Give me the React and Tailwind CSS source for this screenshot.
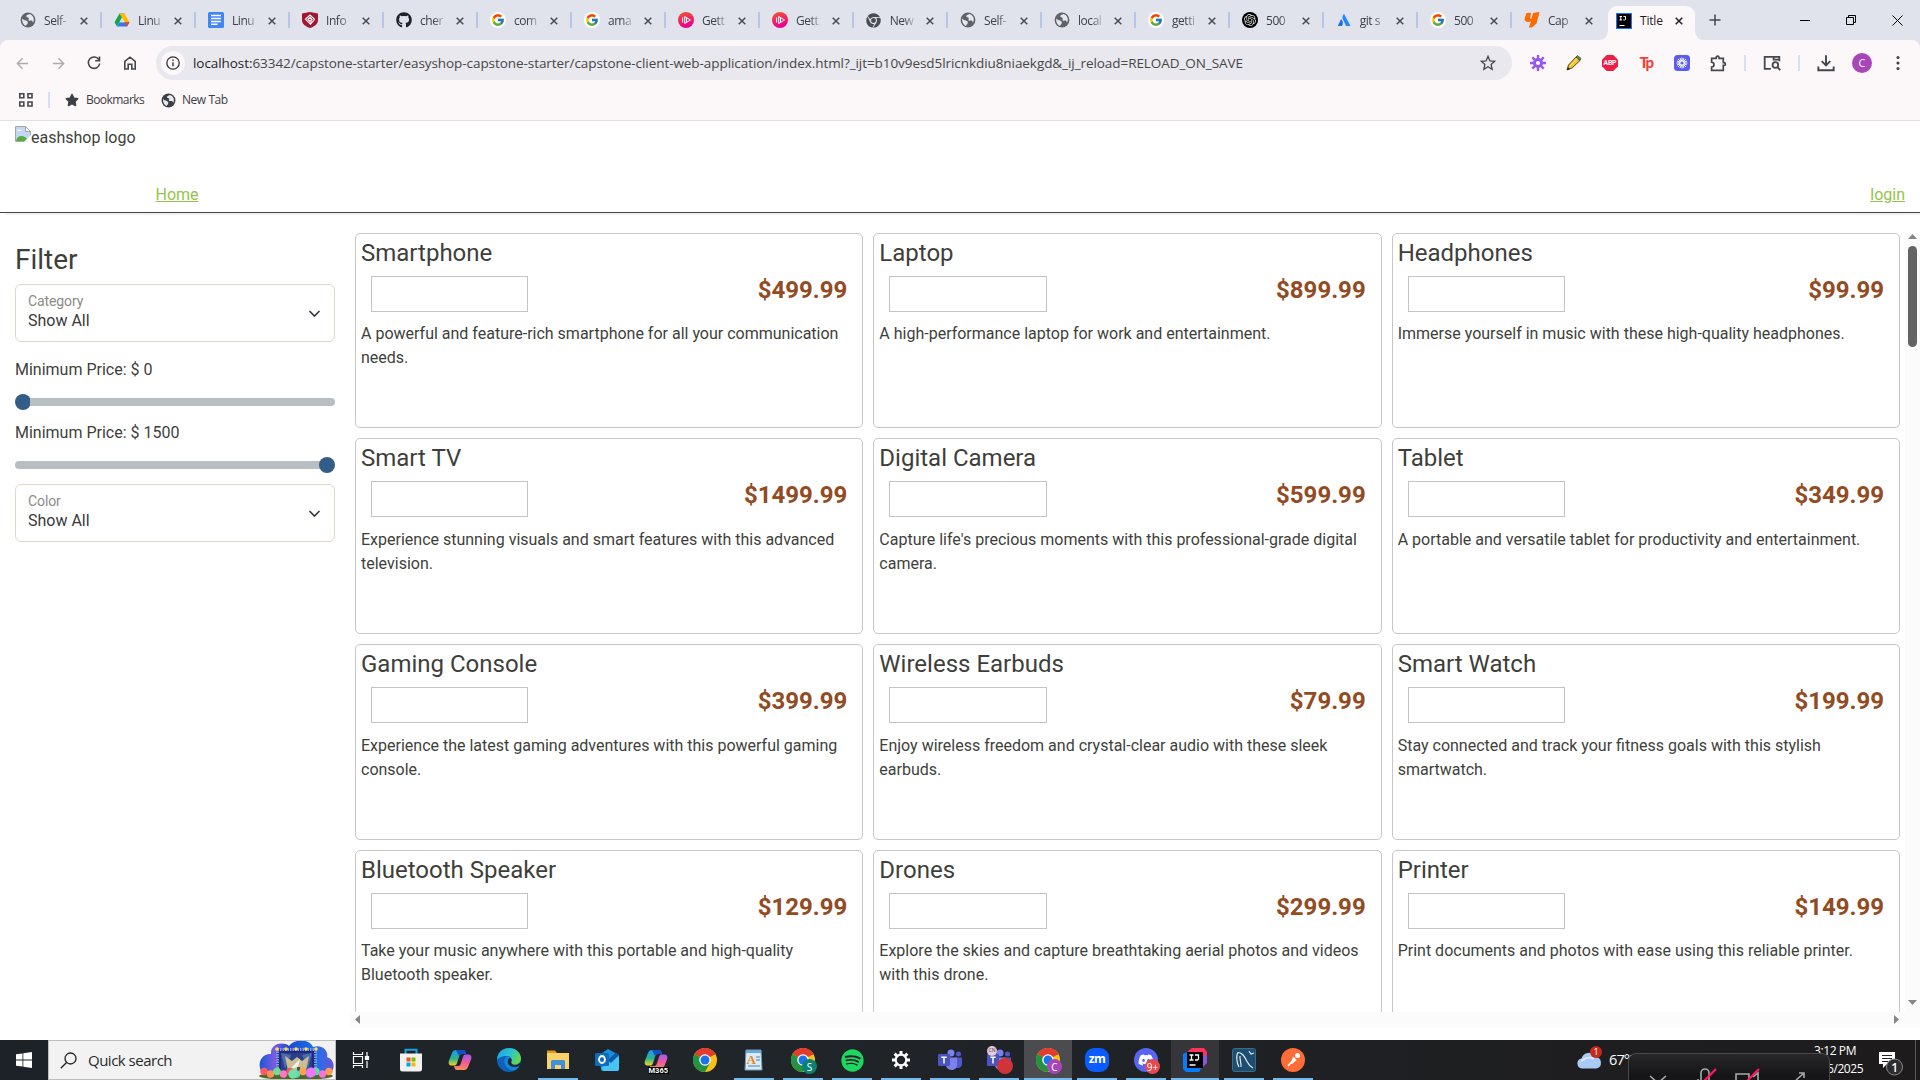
import React from "react";
import { FcGoogle } from "react-icons/fc";
import { FaGithub, FaSpotify, FaStar, FaDiscord, FaChrome } from "react-icons/fa";
import { SiOpenai } from "react-icons/si";

const ui = "font-['Open_Sans','Noto_Sans',sans-serif]";

const Globe = ({ size = 16, color = "#5f6368" }) => (
  <svg width={size} height={size} viewBox="0 0 16 16">
    <circle cx="8" cy="8" r="7.4" fill={color} />
    <path d="M2.200 6.500C3.500 8.500 6 8 7.300 9.200c1 1 .2 2 .2 2.600 0 1-1.500.5-1.300 2.200C3.500 13 1.800 10 2.200 6.500zM9.500 2.100C8 3 6 3 6.300 4.500c.3 1.200 1.900.5 2.400 1.700.4 1.100-.8 1.400 0 2.200.9.700 2.500-.4 3.600.5.600.5.200 1.700.8 1.500C15 7 13 3 9.500 2.100z" fill="#e6e8ee" />
  </svg>
);

const Drive = () => (
  <svg width="16" height="16" viewBox="0 0 16 16">
    <path d="M5.500 1.500h5L8 5.800 3 14.400.5 10.200z" fill="#0fa658" />
    <path d="M5.500 1.500h5l5 8.700h-5z" fill="#ffba00" />
    <path d="M.5 10.200 3 14.400h10l2.500-4.200H5.600L3 14.400z" fill="#3777e3" />
    <path d="M10.500 10.200h5L13 14.400z" fill="#ea4335" />
    <path d="M8 5.800 5.500 10.200h5z" fill="#e0e3ec" />
  </svg>
);
const Docs = () => (
  <svg width="16" height="16" viewBox="0 0 16 16">
    <rect width="16" height="16" rx="1.500" fill="#4285f4" />
    <path d="M3 3.500h10M3 6.500h10M3 9.500h10M3 12.300h6.500" stroke="#fff" strokeWidth="1.400" />
  </svg>
);
const Shield = () => (
  <svg width="16" height="16" viewBox="0 0 16 16">
    <path d="M0 1.500 8 0l8 1.500V8c0 4-3.500 6.500-8 8-4.500-1.500-8-4-8-8z" fill="#a3162f" />
    <path d="M8 3 3.500 7.300 8 11.700l2-2M8 3l4.500 4.300L8 12.800M8 5.400 6 7.400l2 2 2-2z" fill="none" stroke="#fff" strokeWidth="1.100" />
  </svg>
);
const GoogleIcon = () => (
  <span className="flex size-4 items-center justify-center rounded-full bg-white"><FcGoogle size={14} /></span>
);
const Plural = () => (
  <svg width="16" height="16" viewBox="0 0 16 16">
    <defs><linearGradient id="pl" x1="0" y1="0" x2=".3" y2="1"><stop offset="0" stopColor="#f05a28" /><stop offset="1" stopColor="#ec008c" /></linearGradient></defs>
    <circle cx="8" cy="8" r="8" fill="url(#pl)" />
    <path d="M6.700 4.500v7L12.500 8zM4.600 5.500v5M8.500 6v4" fill="none" stroke="#fff" strokeWidth="1" />
  </svg>
);
const Atlas = () => (
  <svg width="14" height="14" viewBox="0 0 14 14">
    <path d="M4 6c2 2 2.500 4.500 1 7H.8z" fill="#1e6fe0" /><path d="M7 .8C4.500 4 5.500 6 7.500 9.500L9 13h4.500z" fill="#2684ff" />
  </svg>
);
const Orange = () => (
  <svg width="16" height="16" viewBox="0 0 16 16">
    <path d="M2.500 1 7 .7 6 6.500l1.500.2L9 1l6.500-1-3 11.500L8 15.500H4.800L7 9.500C3 10.500 0 9.500.6 6.500z" fill="#ff6a00" />
  </svg>
);
const IJ = () => (
  <svg width="16" height="16" viewBox="0 0 16 16">
    <rect x=".5" y=".5" width="15" height="15" fill="#000" stroke="#087cfa" />
    <path d="M3.500 3.500h2.500M4.800 3.500V7M3.500 7h2.500M7.500 3.500h2V6.500L8.800 7h-1.500M3.500 12.500h5" stroke="#fff" fill="none" strokeWidth="1" />
  </svg>
);
const Gpt = () => (
  <span className="flex size-4 items-center justify-center rounded-full bg-black text-[#d8d8d8]"><SiOpenai size={12} /></span>
);

const tabs = [
  ["Self-", <Globe />], ["Linu", <Drive />], ["Linu", <Docs />], ["Info", <Shield />],
  ["cher", <FaGithub size={16} color="#1f2328" />], ["com", <GoogleIcon />], ["ama", <GoogleIcon />],
  ["Gett", <Plural />], ["Gett", <Plural />], ["New", <FaChrome size={15} color="#4a4d51" />],
  ["Self-", <Globe />], ["local", <Globe />], ["getti", <GoogleIcon />], ["500", <Gpt />],
  ["git s", <Atlas />], ["500", <GoogleIcon />], ["Cap", <Orange />],
];

const Cross = ({ c = "#474a50" }) => (
  <svg width="8" height="8" viewBox="0 0 8 8"><path d="M.7.7l6.600 6.600M7.300.7.7 7.300" stroke={c} strokeWidth="1.500" /></svg>
);

function TabStrip() {
  return (
    <div className="flex h-10 bg-[#e0e3ec] pl-2">
      {tabs.map(([t, icon], i) => (
        <div key={i} className="flex h-10 w-[94px] shrink-0 items-center pl-3">
          <span className="flex size-4 items-center justify-center">{icon}</span>
          <span className="ml-2 mt-px w-[28px] whitespace-nowrap text-[12px] tracking-[-0.45px] text-[#3c4048] [mask-image:linear-gradient(to_right,black_50%,transparent)]">{t}</span>
          <span className="ml-[9px] mt-px w-2"><Cross /></span>
          <span className={i < 16 ? "ml-[12px] h-4 w-[2px] shrink-0 bg-[#b6c6e4]" : "hidden"} />
        </div>
      ))}
      <svg width="10" height="40" viewBox="0 0 10 40" className="-ml-2 shrink-0"><path d="M0 40Q10 40 10 30V40z" fill="#fcf7f9" /></svg>
      <div className="mt-[6px] flex h-[34px] w-[87px] shrink-0 items-center rounded-t-[9px] bg-[#fcf7f9] pb-[5px] pl-2">
        <IJ />
        <span className="ml-2 mt-px w-[27px] text-[12px] tracking-[-0.2px] text-[#1f1f1f]">Title</span>
        <span className="ml-2"><Cross c="#222" /></span>
      </div>
      <svg width="10" height="40" viewBox="0 0 10 40" className="shrink-0"><path d="M10 40Q0 40 0 30V40z" fill="#fcf7f9" /></svg>
      <svg width="12" height="12" viewBox="0 0 12 12" className="ml-[4px] mt-[14px] shrink-0"><path d="M6 .5v11M.5 6h11" stroke="#44474c" strokeWidth="1.500" /></svg>
      <div className="ml-auto flex items-center pr-[17px] text-black">
        <svg width="10" height="10" viewBox="0 0 10 10"><path d="M0 5.500h10" stroke="#000" /></svg>
        <svg width="10" height="10" viewBox="0 0 10 10" className="ml-9"><path d="M.5 2.500h7v7h-7zM2.500 2.500v-2h7v7h-2" fill="none" stroke="#000" /></svg>
        <svg width="11" height="11" viewBox="0 0 11 11" className="ml-[36px]"><path d="M.5.5l10 10M10.500.5l-10 10" stroke="#000" /></svg>
      </div>
    </div>
  );
}

const Slot = ({ children, w = "w-9" }) => <span className={"flex h-full shrink-0 items-center justify-center " + w}>{children}</span>;
const Stroke = ({ d, c = "#44474c", s = 16, w = 1.6, children }) => (
  <svg width={s} height={s} viewBox="0 0 16 16" fill="none" stroke={c} strokeWidth={w}><path d={d} />{children}</svg>
);

function Toolbar() {
  return (
    <div className="bg-[#e0e3ec]">
    <div className="flex h-[46px] items-center rounded-t-lg bg-[#fcf7f9] pl-1">
      <Slot><Stroke c="#acabae" w={1.5} d="M14 8H2.500M8 2.500 2.500 8 8 13.500" s={15} /></Slot>
      <Slot><Stroke c="#acabae" w={1.5} d="M2 8h11.500M8 2.500 13.500 8 8 13.500" s={15} /></Slot>
      <Slot><Stroke d="M13 4.800A5.700 5.700 0 1 0 13.700 8.500M13.500 1.500v4.300H9.200" /></Slot>
      <Slot><Stroke d="M2.800 14V6.300L8 2.200l5.200 4.100V14H9.800V9.300H6.200V14z" /></Slot>
      <div className="ml-2 flex h-[34px] w-[1356px] shrink-0 items-center rounded-full bg-[#e9e8ee] pl-[5px]">
        <span className="flex size-6 items-center justify-center rounded-full bg-[#fcf7f9]">
          <svg width="14" height="14" viewBox="0 0 14 14"><circle cx="7" cy="7" r="6.200" fill="none" stroke="#333" strokeWidth="1.300" /><path d="M7 6.200v4M7 3.500v1.400" stroke="#333" strokeWidth="1.400" /></svg>
        </span>
        <span className="ml-2 whitespace-nowrap text-[13.5px] tracking-[-0.065px] text-[#474747]"><span className="text-[#1f1f1f]">localhost:</span>63342/capstone-starter/easyshop-capstone-starter/capstone-client-web-application/index.html?_ijt=b10v9esd5lricnkdiu8niaekgd&amp;_ij_reload=RELOAD_ON_SAVE</span>
        <span className="ml-auto mr-4"><Stroke w={1.3} d="M8 1.300 9.900 5.900l4.900.4-3.700 3.200 1.100 4.900L8 11.800l-4.200 2.600 1.100-4.900L1.200 6.300l4.900-.4z" /></span>
      </div>
      <div className="ml-2 flex h-full items-center">
        <Slot>
          <svg width="16" height="16" viewBox="0 0 16 16"><g stroke="#9458ee" strokeWidth="2.400"><path d="M8 0v16M0 8h16M2.300 2.300l11.400 11.400M13.700 2.300 2.300 13.700" /></g><circle cx="8" cy="8" r="5" fill="#9458ee" /><circle cx="8" cy="8" r="2" fill="#fff" /></svg>
        </Slot>
        <Slot>
          <svg width="16" height="16" viewBox="0 0 16 16"><path d="M1 15 2.500 10 10 2l4 3.500L6 13z" fill="#f5c431" stroke="#5d4514" /><path d="m10 2 1.500-1.500L15 3.500 14 5.500z" fill="#53a348" stroke="#333" strokeWidth=".7" /><path d="m1 15 1-3 2 2z" fill="#222" /><path d="m4 11 7-7.500" stroke="#fbe58b" /></svg>
        </Slot>
        <Slot>
          <svg width="16" height="16" viewBox="0 0 16 16"><path d="M4.700 0h6.600L16 4.700v6.600L11.300 16H4.700L0 11.300V4.700z" fill="#ed1e45" /><text x="8" y="10.400" fontSize="6.800" fontWeight="700" textAnchor="middle" fill="#fff" fontFamily="Roboto" textLength="13">ABP</text></svg>
        </Slot>
        <Slot><span className="mb-px font-['Lato',sans-serif] text-[15px] font-black leading-none tracking-[-1.5px] text-[#f43f3a]">Tp</span></Slot>
        <Slot>
          <svg width="16" height="16" viewBox="0 0 16 16"><rect width="16" height="16" rx="3.500" fill="#5b5cf0" /><g stroke="#fff" strokeWidth="1"><path d="M8 2.500v11M2.500 8h11M4 4l8 8M12 4l-8 8M6 3l4 10M10 3 6 13M3 6l10 4M13 6 3 10" /></g><circle cx="8" cy="8" r="2.700" fill="#fff" /><circle cx="8" cy="8" r="1.600" fill="#5b5cf0" /></svg>
        </Slot>
        <Slot><Stroke s={17} w={1.6} d="M1.500 3.200h4.300V2.400a1.300 1.300 0 0 1 2.700 0v.8H12.500v4h.7a1.300 1.300 0 0 1 0 2.600h-.7v4.700H1.500v-3.200a2 2 0 0 0 0-4.500z" /></Slot>
        <span className="ml-[8px] h-4 w-[2px] bg-[#d3e0f8]" />
        <Slot w="w-[52px]"><Stroke s={18} d="M7 13.200H1.500V2.500h13v4M9.500 2.500h5v2.500h-5z"><circle cx="11" cy="9.800" r="2.500" /><path d="m12.800 11.600 2.600 2.800" /></Stroke></Slot>
        <span className="h-4 w-[2px] bg-[#d3e0f8]" />
        <Slot w="w-[52px]"><Stroke s={18} w={1.7} d="M8 1v9M4.200 6.300 8 10.200l3.800-3.900M1.200 11v3.500h13.600V11" /></Slot>
        <span className="flex size-5 items-center justify-center rounded-full bg-[#a846b9] text-[11px] text-white">C</span>
        <Slot w="w-[52px]"><svg width="4" height="16" viewBox="0 0 4 16" fill="#44474c"><circle cx="2" cy="2.500" r="1.600" /><circle cx="2" cy="8" r="1.600" /><circle cx="2" cy="13.500" r="1.600" /></svg></Slot>
      </div>
    </div>
    </div>
  );
}

function Bookmarks() {
  return (
    <div className="flex h-[35px] items-center border-b border-[#e2dfe2] bg-[#fcf7f9] pb-[6px] pl-[19px] text-[12px] text-[#3c4043]">
      <svg width="14" height="14" viewBox="0 0 14 14" fill="none" stroke="#44474c" strokeWidth="1.600"><path d="M.8.8h4v4h-4zM9 .8h4v4H9zM.8 9h4v4h-4zM9 9h4v4H9z" /></svg>
      <span className="ml-[15px] h-4 w-[2px] bg-[#d3e0f8]" />
      <span className="ml-[15px]"><FaStar size={14} color="#3c4043" /></span>
      <span className="ml-[7px] w-[75px] tracking-[-0.55px]">Bookmarks</span>
      <Globe size={15} color="#3c4043" />
      <span className="ml-[6px] tracking-[-0.45px]">New Tab</span>
    </div>
  );
}

const products = [
  ["Smartphone", "499.99", "A powerful and feature-rich smartphone for all your communication needs."],
  ["Laptop", "899.99", "A high-performance laptop for work and entertainment."],
  ["Headphones", "99.99", "Immerse yourself in music with these high-quality headphones."],
  ["Smart TV", "1499.99", "Experience stunning visuals and smart features with this advanced television."],
  ["Digital Camera", "599.99", "Capture life's precious moments with this professional-grade digital camera."],
  ["Tablet", "349.99", "A portable and versatile tablet for productivity and entertainment."],
  ["Gaming Console", "399.99", "Experience the latest gaming adventures with this powerful gaming console."],
  ["Wireless Earbuds", "79.99", "Enjoy wireless freedom and crystal-clear audio with these sleek earbuds."],
  ["Smart Watch", "199.99", "Stay connected and track your fitness goals with this stylish smartwatch."],
  ["Bluetooth Speaker", "129.99", "Take your music anywhere with this portable and high-quality Bluetooth speaker."],
  ["Drones", "299.99", "Explore the skies and capture breathtaking aerial photos and videos with this drone."],
  ["Printer", "149.99", "Print documents and photos with ease using this reliable printer."],
];

function Card({ p }) {
  return (
    <div className="h-[195.67px] rounded-[5px] border border-[#c6c6c6] px-[5px] pt-[5px]">
      <h3 className="text-[24px] leading-[28.8px]">{p[0]}</h3>
      <div className="mt-2 flex h-[36px] items-start justify-between px-[10px]">
        <div className="h-[36px] w-[157.3px] border border-[#c4c4c4]" />
        <span className="text-[24px] font-bold leading-[28px] text-[#924b22]">${p[1]}</span>
      </div>
      <p className="mt-[10.7px] text-[16px] leading-6">{p[2]}</p>
    </div>
  );
}

function SelectBox({ label }) {
  return (
    <div className="flex h-[58px] w-[320px] items-center justify-between rounded-md border border-[#ded8c8] pb-[3px] pl-3 pr-[14.5px]">
      <div>
        <div className="text-[14px] leading-[18px] tracking-[-0.1px] text-[#8d8b86]">{label}</div>
        <div className="mt-px text-[16px] leading-[20px] text-[#3a3a38]">Show All</div>
      </div>
      <svg width="11" height="8" viewBox="0 0 11 8" fill="none" stroke="#343a40" strokeWidth="1.700" strokeLinecap="round" className="mt-[4px]"><path d="m1 1.500 4.500 4.500L10 1.500" /></svg>
    </div>
  );
}

const Range = ({ end }) => (
  <div className="flex h-4 w-[320px] items-center">
    {end ? null : <span className="size-4 shrink-0 rounded-full bg-[#325d88]" />}
    <span className={end ? "h-2 flex-1 rounded-l-full bg-[#b8bfc2]" : "-ml-px h-2 flex-1 rounded-r-full bg-[#b8bfc2]"} />
    {end ? <span className="-ml-px size-4 shrink-0 rounded-full bg-[#325d88]" /> : null}
  </div>
);

function Page() {
  return (
    <div className="flex h-[919px] flex-col bg-white font-['Roboto',sans-serif] text-[#3e3f3a]">
      <header className="flex h-[92px] shrink-0 flex-col border-b border-[#444] px-[15px] shadow-[5px_2px_0_#f0f0f0]">
        <div className="mt-[5px] flex h-6 items-start">
          <svg width="16" height="16" viewBox="0 0 16 16">
            <path d="M.5.500h10l5 5v10H.5z" fill="#c3d6f5" stroke="#a5a5a5" /><path d="M10.500.5v5h5z" fill="#fff" stroke="#a5a5a5" /><path d="M2 5c1-2 4-2 5 0z" fill="#fff" /><path d="M1 15c1-6 8-7 13 0z" fill="#56ad3c" /><path d="M9 15.800 16 9v7z" fill="#fff" />
          </svg>
          <span className="text-[16px] leading-6">eashshop logo</span>
        </div>
        <div className="mt-[33px] flex justify-between pl-[140.5px] text-[16px] leading-6 text-[#93c54b] underline">
          <span>Home</span><span>login</span>
        </div>
      </header>
      <div className="flex h-[814px]">
        <aside className="w-[340px] shrink-0 pl-[15px] pt-[30px]">
          <h2 className="text-[28px] leading-[34px]">Filter</h2>
          <div className="mt-[7px]"><SelectBox label="Category" /></div>
          <div className="mt-[16px] text-[16px] leading-6">Minimum Price: $ 0</div>
          <div className="mt-[12px]"><Range /></div>
          <div className="mt-[11px] text-[16px] leading-6">Minimum Price: $ 1500</div>
          <div className="mt-[12px]"><Range end /></div>
          <div className="mt-[11px]"><SelectBox label="Color" /></div>
        </aside>
        <div className="flex w-[1565px] shrink-0 flex-col">
          <div className="grid h-[799px] grid-cols-3 content-start gap-[10px] overflow-hidden pl-[15px] pr-[5px] pt-[19.8px]">
            {products.map((p) => <Card key={p[0]} p={p} />)}
          </div>
          <div className="ml-[10px] flex h-[15px] items-center justify-between bg-[#fbfbfb] pl-[5px] pr-[6px]">
            <svg width="5" height="9" viewBox="0 0 5 9"><path d="M5 0v9L0 4.500z" fill="#858585" /></svg>
            <svg width="5" height="9" viewBox="0 0 5 9"><path d="M0 0v9l5-4.500z" fill="#858585" /></svg>
          </div>
        </div>
        <div className="mt-5 flex h-[794px] w-[15px] flex-col items-center bg-[#fbfbfb]">
          <svg width="9" height="5" viewBox="0 0 9 5" className="mt-[1px]"><path d="M0 5h9L4.500 0z" fill="#858585" /></svg>
          <span className="mt-[7px] h-[101px] w-[9px] rounded-full bg-[#636363]" />
          <svg width="9" height="5" viewBox="0 0 9 5" className="mb-[22px] mt-auto"><path d="M0 0h9L4.500 5z" fill="#858585" /></svg>
        </div>
      </div>
    </div>
  );
}

const ChromeLogo = () => (
  <svg width="24" height="24" viewBox="0 0 24 24">
    <circle cx="12" cy="12" r="12" fill="#fbc116" />
    <path d="M12 12 1.600 6A12 12 0 0 1 22.400 6z" fill="#e33b2e" />
    <path d="M12 12 1.600 6A12 12 0 0 0 12 24l5-9z" fill="#229342" />
    <path d="M12 6.200h10.500" stroke="#e33b2e" />
    <circle cx="12" cy="12" r="5.800" fill="#fff" /><circle cx="12" cy="12" r="4.500" fill="#1a73e8" />
  </svg>
);
const Badge = ({ bg, children, cls = "size-[15px]" }) => (
  <span className={"absolute -bottom-[2px] -right-[2px] flex items-center justify-center rounded-full text-[10px] leading-none text-white " + cls + " " + bg}>{children}</span>
);
const CopilotLogo = () => (
  <svg width="24" height="24" viewBox="0 0 24 24">
    <defs>
      <linearGradient id="ca" x1="0" y1="0" x2="0" y2="1"><stop offset="0" stopColor="#1b9cf2" /><stop offset=".55" stopColor="#2bb38c" /><stop offset="1" stopColor="#f4d32a" /></linearGradient>
      <linearGradient id="cb" x1="0" y1="0" x2="0" y2="1"><stop offset="0" stopColor="#a259f2" /><stop offset=".5" stopColor="#ee5a9c" /><stop offset="1" stopColor="#fb9151" /></linearGradient>
    </defs>
    <path d="M8 2h7c2 0 2.500 2 3 4h-4c-2 0-2.500 1-3 3l-2 6c-.6 2-1.400 2.500-3 2.500H4c-3 0-4-2-3-5L4 5c.8-2 2-3 4-3z" fill="url(#ca)" />
    <path d="M16 22H9c-2 0-2.500-2-3-4h4c2 0 2.500-1 3-3l2-6c.6-2 1.400-2.500 3-2.500h2c3 0 4 2 3 5L20 19c-.8 2-2 3-4 3z" fill="url(#cb)" />
    <path d="M8 2h7c2 0 2.500 2 3 4h-4c-2 0-2.500.5-3 2z" fill="#164fc4" />
  </svg>
);
const TeamsLogo = () => (
  <svg width="24" height="24" viewBox="0 0 24 24">
    <circle cx="13" cy="5" r="3.500" fill="#7b83eb" /><circle cx="20.500" cy="6" r="2.500" fill="#5059c9" />
    <path d="M17 9.500h7V16c0 3-3 5-6 3.500z" fill="#5059c9" /><path d="M8 9.500h11V17c0 6-9 7-11 1z" fill="#7b83eb" />
    <rect y="6" width="12" height="12" rx="1" fill="#4b53bc" /><path d="M3.300 9.200h5.400M6 9.200v6.300" stroke="#fff" strokeWidth="1.500" />
  </svg>
);

const apps = [
  { icon: <svg width="18" height="16" viewBox="0 0 18 16" fill="none" stroke="#fff" strokeWidth="1.200" className="mr-[3px]"><path d="M1.500 0v2.500h9V0M1.500 4.500h9v7h-9zM1.500 16v-2.500h9V16M15 0v4M15 9v7" /><path d="M13.500 4.500h3v3h-3z" fill="#fff" /></svg> },
  { icon: <svg width="24" height="24" viewBox="0 0 24 24"><path d="M6.500 6V1.800h11V6" fill="none" stroke="#1ba1e2" strokeWidth="2" /><path d="M1 5.500h22V21a2.500 2.500 0 0 1-2.500 2.500h-17A2.500 2.500 0 0 1 1 21z" fill="#f1f1f1" /><path d="M7.500 9.500h4v4h-4z" fill="#f25022" /><path d="M12.500 9.500h4v4h-4z" fill="#7fba00" /><path d="M7.500 14.500h4v4h-4z" fill="#00a4ef" /><path d="M12.500 14.500h4v4h-4z" fill="#ffb900" /></svg> },
  { icon: <CopilotLogo /> },
  { icon: <svg width="24" height="24" viewBox="0 0 24 24"><defs><linearGradient id="ed" x1="0" y1="0" x2="1" y2=".4"><stop offset="0" stopColor="#1f9de6" /><stop offset=".6" stopColor="#2bc3d2" /><stop offset="1" stopColor="#62d84e" /></linearGradient></defs><circle cx="12" cy="12" r="12" fill="#0c62b8" /><path d="M0 12C0 5 5 0 12 0s12 5 12 10.500c0 4-3 6-6.500 6-2.500 0-4-1-3.500-2 1.500-2 1-6.500-4-6.500S1 10 0 12z" fill="url(#ed)" /><path d="M14 14.500c1.500-2 1-6-3-6.500-5 1-6 10 3 14 4 .8 6.500-1 8-3.500-5 2-9-.5-8-4z" fill="#1585d8" /><path d="M24 14c-3 4-9.500 4.500-10-.5 1-1 .5-3-1-3.500-3 1-3 6 .5 8 3 1.700 7 1 9.500-1z" fill="#20262b" /></svg> },
  { icon: <svg width="24" height="24" viewBox="0 0 24 24"><path d="M1 2.500h8l2 2.500H1z" fill="#dd9a14" /><path d="M1 5h22v16H1z" fill="#fbd268" /><path d="M5 21v-7.500A1.500 1.500 0 0 1 6.500 12h11a1.500 1.500 0 0 1 1.500 1.500V21h-4v-4H9v4z" fill="#3f8fdc" /></svg>, run: 1 },
  { icon: <svg width="24" height="24" viewBox="0 0 24 24"><path d="M4 7 13 1l11 6v14a2 2 0 0 1-2 2H8a2 2 0 0 1-2-2z" fill="#1490df" /><path d="m6 20 18-12v13a2 2 0 0 1-2 2H8z" fill="#45c6f5" /><path d="M13 12 21 4.500 24 7 16 15z" fill="#0c59a4" /><rect y="5" width="14" height="13" rx="1.500" fill="#0f6cbd" /><ellipse cx="7" cy="11.500" rx="3" ry="3.500" fill="none" stroke="#fff" strokeWidth="1.800" /></svg> },
  { icon: <span className="relative flex h-6 w-6"><CopilotLogo /><span className="absolute -bottom-[2px] -right-[1px] bg-black px-px font-['Roboto',sans-serif] text-[7.500px] font-bold leading-[7px] text-white">M365</span></span> },
  { icon: <ChromeLogo /> },
  { icon: <svg width="20" height="24" viewBox="0 0 20 24"><path d="M2 2h15l1 20H1z" fill="#dceaf4" stroke="#6d9cc0" /><path d="M2 2h15v3H2z" fill="#6aa9d6" /><text x="2.500" y="16" fontSize="13" fontWeight="700" fontFamily="Liberation Serif" fill="#e98326">A</text><path d="M12 9h4M12 12h4M4 18h12" stroke="#4384b9" /></svg>, run: 1 },
  { icon: <span className="relative"><ChromeLogo /><Badge bg="bg-[#0b8073]">S</Badge></span>, run: 1 },
  { icon: <FaSpotify size={23} color="#1ed760" />, run: 1 },
  { icon: <svg width="20" height="20" viewBox="0 0 20 20" fill="none" stroke="#fff"><circle cx="10" cy="10" r="5.300" strokeWidth="2.200" /><path d="M10 1v3.500M10 15.500V19M1 10h3.500M15.500 10H19M3.600 3.600 6 6M14 14l2.400 2.400M16.400 3.600 14 6M6 14l-2.400 2.400" strokeWidth="3" /></svg>, run: 1 },
  { icon: <TeamsLogo />, run: 1 },
  { icon: <span className="relative"><TeamsLogo /><span className="absolute left-0 top-[-2px] flex size-[10px] items-center justify-center rounded-full bg-[#e4ccd8] text-[5px] text-[#603050]">CN</span><Badge bg="bg-[#d13438]" cls="size-4" /></span>, run: 1 },
  { icon: <span className="relative"><ChromeLogo /><Badge bg="bg-[#a846b9]">C</Badge></span>, run: 2, hl: "bg-[#4b4c4f]" },
  { icon: <span className="flex size-6 items-center justify-center rounded-[9px] bg-[#0b5cff] pb-[2px] text-[12px] font-bold tracking-[-0.5px] text-white">zm</span>, run: 1 },
  { icon: <span className="relative flex size-6 items-center justify-center rounded-full bg-[#5865f2]"><FaDiscord size={16} color="#fff" /><Badge bg="bg-[#e5484d]">9+</Badge></span>, run: 1 },
  { icon: <svg width="24" height="24" viewBox="0 0 24 24"><path d="M0 6 6 3v18H0z" fill="#087cfa" /><path d="M0 15h12l6 6-2 3H3l-3-3z" fill="#087cfa" /><path d="M5 3 9 0h12l3 4v8l-6 8z" fill="#fe315d" /><path d="M20 8l4-1v8l-6 6z" fill="#8a55d8" /><path d="M4 4h16v16H4z" fill="#000" /><path d="M6.500 7h4M8.500 7v5M6.500 12h4M12 7h3.500v4l-1 1H12M6.500 17h6" stroke="#fff" strokeWidth="1.300" fill="none" /></svg>, run: 2, hl: "bg-[#36363a]" },
  { icon: <svg width="24" height="24" viewBox="0 0 24 24"><rect x=".5" y=".5" width="23" height="23" rx="2" fill="#1d4e70" stroke="#386b8c" /><path d="M7 19C4.500 15 4 7 6 4.500c5 0 7 5 9 9 1.500 3 3 5 6 6.500M8 8c-.5 4 1.500 7 1 11M17 3l2 3 3-1" stroke="#dfe9f0" strokeWidth="1.200" fill="none" /></svg>, run: 1 },
  { icon: <svg width="24" height="24" viewBox="0 0 24 24"><circle cx="12" cy="12" r="12" fill="#ff6c37" /><path d="m7 18 7-8M12.500 10l2 2-4 3.500z" stroke="#fff" strokeWidth="1.600" fill="#fff" /><circle cx="16.500" cy="7.500" r="2.500" fill="#fff" /></svg>, run: 1 },
];

const balloons = ["#ff5a5f", "#ff8f5a", "#6fe08a", "#ff77c8", "#f45b5b", "#53d8c9", "#ffa24a", "#b35cff", "#57e39b", "#ff6fe0", "#ff9a55"];

const Festival = () => (
  <svg width="75" height="38" viewBox="0 0 75 38" className="shrink-0">
    <defs>
      <linearGradient id="tree" x1="0" y1="0" x2="1" y2="0"><stop offset="0" stopColor="#1b57d8" /><stop offset=".2" stopColor="#7a5be0" /><stop offset=".4" stopColor="#1c49cf" /><stop offset=".75" stopColor="#1673ee" /><stop offset="1" stopColor="#6a55d6" /></linearGradient>
    </defs>
    <ellipse cx="37" cy="35" rx="37" ry="4" fill="#4c6b2a" />
    <path d="M2 30C-2 22 3 12 12 13 11 3 24 0 30 5 36-3 51-2 54 6c9-3 16 4 14 10 8 3 8 11 4 16z" fill="url(#tree)" />
    <path d="M18.500 8.500h38V31h-38z" fill="#1b2c80" stroke="#8e9be0" strokeWidth="3" strokeDasharray="1.500 1" />
    <path d="M22 12h31v18H22z" fill="#2b3f86" />
    <path d="m22 12 10 2-6 14zM53 12l-10 2 6 14z" fill="#4d6cb0" />
    <path d="M26 15l7 5 5-4 5 4 7-5-3 15H29z" fill="#cbbf91" />
    <path d="m31 28 10-10-2 8z" fill="#f1f1f1" /><path d="M38 30v-4h3v4z" fill="#315e4c" />
    <g fill="#ffe15a">{[18, 27, 37, 47, 57].map((x) => <circle key={x} cx={x} cy="8" r="1.800" />)}</g>
    {balloons.map((c, i) => <circle key={i} cx={5 + i * 6.5} cy={i % 2 ? 33 : 30.5} r="3.700" fill={c} />)}
    <circle cx="34" cy="33" r="4.700" fill="#6fe0a8" /><circle cx="52" cy="31.500" r="5" fill="#ee77ff" />
  </svg>
);

function Taskbar() {
  return (
    <div className={"flex h-10 overflow-hidden bg-linear-to-r from-[#1c2227] via-[#20252a] via-40% to-[#1d1b1c] " + ui}>
      <div className="flex w-12 shrink-0 items-center justify-center">
        <svg width="16" height="16" viewBox="0 0 16 16" fill="#fff"><path d="M0 2.300 6.500 1.400v6.200H0zM7.300 1.300 16 0v7.600H7.300zM0 8.400h6.500v6.200L0 13.700zM7.300 8.400H16V16l-8.700-1.300z" /></svg>
      </div>
      <div className="flex w-[288px] shrink-0 items-center border border-[#bdbdbd] bg-[#f2f2f2] pl-[11px]">
        <svg width="17" height="17" viewBox="0 0 17 17" fill="none" stroke="#222" strokeWidth="1.300"><circle cx="10.500" cy="6.500" r="5.500" /><path d="M6.500 10.500.8 16.300" /></svg>
        <span className="ml-[11px] w-[171px] text-[15px] tracking-[-0.5px] text-[#2b2b2b]">Quick search</span>
        <Festival />
      </div>
      <div className="ml-[2px] flex gap-px">
        {apps.map((a, i) => (
          <div key={i} className={"flex w-12 flex-col items-center " + (a.hl || "")}>
            <div className="flex h-[38px] items-center pt-[2px]">{a.icon}</div>
            {a.run ? <span className={a.run === 2 ? "h-[2px] w-12 bg-[#76b9ed]" : "h-[2px] w-10 bg-[#76b9ed]"} /> : null}
          </div>
        ))}
      </div>
      <div className="ml-auto flex w-[343px] items-center text-white">
        <span className="relative">
          <svg width="25" height="18" viewBox="0 0 25 18"><path d="M5 17.500a5 5 0 0 1-.5-9.900A7.500 7.500 0 0 1 18.500 6a5.800 5.800 0 0 1 .7 11.500z" fill="#a9c9f7" /><path d="M4 10c3-1 6-6 13-2" stroke="#dbe9fd" strokeWidth="2" fill="none" /></svg>
          <span className="absolute -right-0 -top-[5px] flex size-3 items-center justify-center rounded-full bg-[#c42b1c] text-[9px]">1</span>
        </span>
        <span className="ml-[7px] text-[14.5px] tracking-[-0.9px]">67°F</span>
        <div className="relative ml-auto w-[101px] text-[12px] tracking-[-0.4px]">
          <div className="leading-[18px]">3:12 PM</div>
          <div className="-ml-[4px] leading-[18px]">1/16/2025</div>
          <div className="absolute -left-[186px] top-[11px] flex h-10 w-[202px] items-start rounded-t-lg border border-[#4a4a4c] bg-linear-to-b from-[#27272a] to-[#151517] to-60%">
            <svg width="200" height="27" viewBox="0 0 200 27" fill="none" stroke="#a9a9ab" strokeWidth="1.600">
              <path d="m21 22 8 7 8-7M72 27v-8a4 4 0 0 1 8 0v8M69 25v3M107 28v-8h13v7M124 23l5-4v8" />
              <path d="m167 26 7-6M170 19h5v5" />
              <path d="M74 28 87 15M117 28l13-13" stroke="#ff1760" strokeWidth="2.200" />
            </svg>
          </div>
          <div className="absolute left-[65px] top-[6px]">
            <svg width="26" height="28" viewBox="0 0 26 28"><path d="M0 4h16v12H8l-4 4v-4H0z" fill="#fff" /><path d="M3 7.500h10M3 10.500h10M3 13.500h6" stroke="#222" /><circle cx="15.500" cy="19" r="8" fill="#2d2d2f" stroke="#8a8a8a" /><text x="15.500" y="23.500" fontSize="12" fontWeight="600" fill="#fff" textAnchor="middle" fontFamily="Open Sans">1</text></svg>
          </div>
        </div>
        <span className="mr-1 h-10 w-px bg-[#5a5a5a]" />
      </div>
    </div>
  );
}

export default function App() {
  return (
    <div className={"flex h-[1080px] w-[1920px] flex-col overflow-hidden bg-white " + ui}>
      <TabStrip />
      <Toolbar />
      <Bookmarks />
      <Page />
      <Taskbar />
    </div>
  );
}
